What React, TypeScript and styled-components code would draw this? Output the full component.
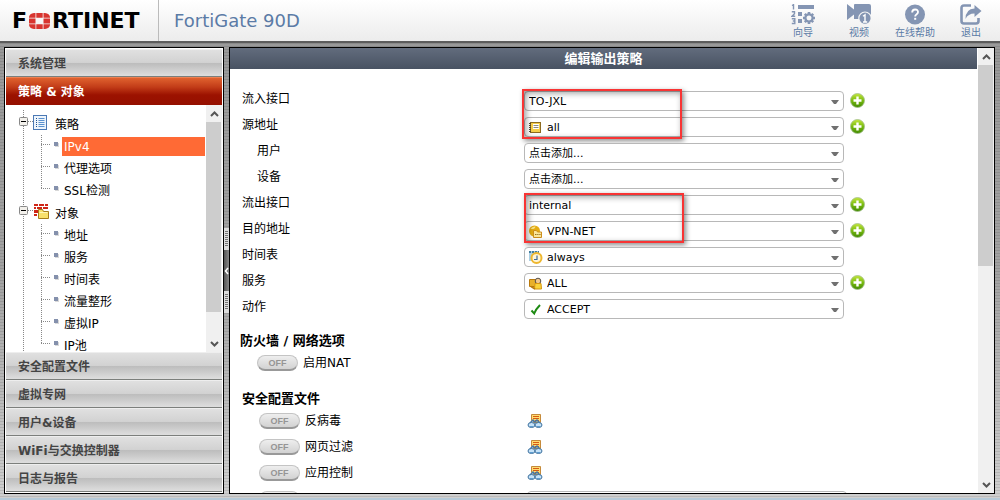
import React, { useState } from 'react';
import styled, { createGlobalStyle, css } from 'styled-components';

const GlobalStyle = createGlobalStyle`
  * { box-sizing: border-box; }
  body {
    margin: 0;
    font-family: "DejaVu Sans", "Noto Sans CJK SC", sans-serif;
    font-size: 12px;
    color: #000;
  }
  button, select, input { font: inherit; color: inherit; }
  h1, h2, ul { margin: 0; padding: 0; }
  ul { list-style: none; }
`;

const dottedY = 'repeating-linear-gradient(#888 0 1px, transparent 1px 2px)';
const dottedX = 'repeating-linear-gradient(90deg, #888 0 1px, transparent 1px 2px)';

const Page = styled.div`
  display: flex;
  flex-direction: column;
  height: 100vh;
  overflow: hidden;
`;

const Header = styled.header`
  display: flex;
  flex: none;
  height: 43px;
  border-bottom: 2px solid #5c5c5c;
  background: linear-gradient(#ffffff, #ececec);
`;

const Brand = styled.div`
  display: flex;
  align-items: center;
  gap: 2px;
  width: 159px;
  padding-left: 12px;
  border-right: 1px solid #bbb;
  font-size: 22px;
  line-height: 41px;
  font-weight: bold;
`;

const Product = styled.h1`
  flex: 1;
  padding-left: 15px;
  font-size: 18px;
  line-height: 41px;
  font-weight: normal;
  color: #5b7ba6;
`;

const Tools = styled.nav`
  display: flex;
  padding-right: 1px;
`;

const Tool = styled.button`
  display: flex;
  flex-direction: column;
  align-items: center;
  width: 56px;
  padding: 4px 0 0;
  border: 0;
  background: none;
  font-size: 10px;
  line-height: 16px;
  color: #5b7ba6;
  cursor: pointer;
  svg { display: block; }
`;

const Desk = styled.div`
  display: flex;
  flex: 1;
  min-height: 0;
  padding: 4px 5px 4px 4px;
  border-bottom: 2px solid #b6cad8;
  background:
    repeating-linear-gradient(rgba(0, 0, 0, 0.1) 0 1px, transparent 1px 3px),
    linear-gradient(#999 0, #a2a2a2 50%, #cfcfcf 100%);
`;

const Sidebar = styled.aside`
  display: flex;
  flex-direction: column;
  flex: none;
  width: 220px;
  padding: 1px;
  border: 1px solid #000;
  background: #fff;
`;

const MenuHead = styled.button<{ $active?: boolean }>`
  flex: none;
  height: 28px;
  padding: 2px 12px 0;
  border: 0;
  border-bottom: 1px solid #7c7f7c;
  border-top: 1px solid #eee;
  background: linear-gradient(#e0e0e0 0, #d2d2d2 48%, #bdbdbd 52%, #dedede 100%);
  font-weight: bold;
  line-height: 24px;
  text-align: left;
  color: #444;
  cursor: pointer;
  ${p => p.$active && css`
    border-top-color: #ee8152;
    border-bottom-color: #941000;
    background: linear-gradient(#e0622f 0, #c23c18 35%, #9c1200 65%, #951000 100%);
    color: #fff;
  `}
`;

const TreePane = styled.div`
  display: flex;
  flex: 1;
  min-height: 0;
  overflow: hidden;
`;

const Tree = styled.ul`
  flex: 1;
  padding-top: 7px;
  padding-right: 1px;
  overflow: hidden;
  background: ${dottedY} 17px 5px / 1px 100% no-repeat;
`;

const Root = styled.div`
  display: flex;
  align-items: center;
  height: 23px;
  padding-left: 13px;
`;

const Expander = styled.button`
  display: block;
  width: 9px;
  height: 9px;
  margin-bottom: 4px;
  padding: 0;
  border: 0;
  background: none;
  svg { display: block; }
`;

const Dash = styled.span<{ $w: number }>`
  width: ${p => p.$w}px;
  height: 1px;
  margin-bottom: 4px;
  background: ${dottedX};
`;

const RootIcon = styled.span`
  width: 22px;
  height: 18px;
  svg { display: block; }
`;

const Branches = styled.ul`
  margin-left: 35px;
  background: ${dottedY} 0 0 / 1px calc(100% - 12px) no-repeat;
`;

const Branch = styled.li`
  display: flex;
  align-items: center;
  height: 22px;
`;

const Bullet = styled.span`
  width: 4px;
  height: 4px;
  margin: 0 4px 4px 4px;
  background: #8490ac;
  box-shadow: 1px 1px 0 #d8d8d8;
`;

const TreeLink = styled.a<{ $active?: boolean }>`
  flex: 1;
  height: 19px;
  padding-left: 2px;
  line-height: 20px;
  text-decoration: none;
  color: ${p => (p.$active ? '#fff' : '#000')};
  background: ${p => (p.$active ? '#ff6a35' : 'transparent')};
`;

const Bar = styled.div`
  display: flex;
  flex-direction: column;
  flex: none;
  width: 16px;
  background: #f0f0f0;
`;

const BarButton = styled.button`
  display: flex;
  align-items: center;
  justify-content: center;
  height: 17px;
  padding: 0;
  border: 0;
  background: none;
`;

const BarTrack = styled.div`
  flex: 1;
`;

const Thumb = styled.div<{ $size: number }>`
  width: 15px;
  height: ${p => p.$size}%;
  background: #cdcdcd;
`;

const Splitter = styled.div`
  display: flex;
  flex-direction: column;
  justify-content: center;
  flex: none;
  width: 5px;
`;

const Grip = styled.span`
  height: 22px;
  background:
    repeating-linear-gradient(#777 0 1px, transparent 1px 2px) 1px 3px / 3px 16px no-repeat,
    #ddd;
`;

const Collapse = styled.button`
  height: 41px;
  padding: 0;
  border: 0;
  background: linear-gradient(90deg, #555, #888);
  svg { display: block; }
`;

const Panel = styled.main`
  display: flex;
  flex: 1;
  min-width: 0;
  border: 1px solid #000;
  background: #fff;
`;

const Content = styled.div`
  flex: 1;
  min-width: 0;
  margin-right: 1px;
  overflow: hidden;
`;

const Title = styled.h2`
  height: 21px;
  font-size: 13px;
  line-height: 22px;
  text-align: center;
  color: #fff;
  background: linear-gradient(#626c7d, #485262);
`;

const Fields = styled.div`
  display: flex;
  flex-direction: column;
  gap: 6px;
  padding: 22px 12px 0;
`;

const FieldGroup = styled.div`
  position: relative;
  display: flex;
  flex-direction: column;
  gap: 6px;
`;

const Highlight = styled.span<{ $left: number }>`
  position: absolute;
  top: -2px;
  bottom: -2px;
  left: ${p => p.$left}px;
  width: 160px;
  border: 2px solid #f83434;
  box-shadow: 2px 2px 5px rgba(0, 0, 0, 0.45), inset 2px 2px 6px rgba(0, 0, 0, 0.4);
  pointer-events: none;
`;

const FieldRow = styled.div`
  display: flex;
  height: 20px;
`;

const FieldLabel = styled.label<{ $nested?: boolean }>`
  flex: none;
  width: 282px;
  padding-left: ${p => (p.$nested ? 15 : 0)}px;
  line-height: 16px;
`;

const Combo = styled.span`
  position: relative;
  display: block;
  width: 320px;
  height: 20px;
`;

const Select = styled.select<{ $icon?: boolean }>`
  display: block;
  width: 100%;
  height: 20px;
  padding: 2px 20px 0 ${p => (p.$icon ? 22 : 4)}px;
  border: 1px solid #b8b8b8;
  border-radius: 4px;
  background: #fff;
  appearance: none;
  font-size: 11px;
  line-height: 16px;
`;

const ComboIcon = styled.svg`
  position: absolute;
  top: 4px;
  left: 5px;
  pointer-events: none;
`;

const Caret = styled.svg`
  position: absolute;
  top: 9px;
  right: 5px;
  pointer-events: none;
`;

const AddButton = styled.button`
  width: 15px;
  height: 15px;
  margin: 2px 0 0 6px;
  padding: 0;
  border: 0;
  background: none;
  svg { display: block; }
`;

const Section = styled.section<{ $top: number; $left: number }>`
  padding: ${p => p.$top}px 12px 0 ${p => p.$left}px;
`;

const SectionTitle = styled.h2`
  margin-bottom: 5px;
  font-size: 13px;
  line-height: 18px;
`;

const OptionRow = styled.div`
  display: flex;
  height: 16px;
  margin-bottom: 10px;
  padding-left: 17px;
`;

const SwitchLabel = styled.label`
  display: flex;
  flex: none;
  width: 268px;
  gap: 5px;
  line-height: 16px;
`;

const SwitchInput = styled.input`
  position: absolute;
  opacity: 0;
`;

const Knob = styled.span`
  width: 41px;
  height: 16px;
  border-radius: 8px;
  border: 1px solid #c4c4c4;
  border-bottom: 2px solid #999;
  background: linear-gradient(#eeeeee, #d2d2d2);
  font: bold 9px/14px "Liberation Sans", sans-serif;
  text-align: center;
  color: #959595;
`;

const IconButton = styled.button`
  height: 16px;
  padding: 0;
  border: 0;
  background: none;
  svg { display: block; }
`;

const steel = '#8495b3';

const LogoO = () => (
  <svg width="21" height="16" viewBox="0 0 21 16" aria-hidden="true">
    <path
      fill="#d8352f"
      d="M5 0h1.500v4.800H0V4Q.5.500 5 0zM7.300 0h6.400v4.800H7.300zM14.500 0H16q4.500.5 5 4v.8h-6.500zM0 5.600h6.500v4.800H0zM14.500 5.600H21v4.800h-6.500zM0 11.200h6.500V16H5Q.5 15.500 0 12zM7.300 11.200h6.400V16H7.300zM14.500 11.200H21v.8q-.5 3.500-5 4h-1.500z"
    />
  </svg>
);

const WizardIcon = () => (
  <svg width="24" height="21" viewBox="0 0 24 21" fill={steel}>
    <path d="M7 1h16v4H7zM7 8h4v4H7zM7 15h4v4H7z" />
    <path d="M1 1.500L2.500.7V5.500M.8 7.700h2.700v2L1 12.300h3.200M.8 14.700h3v2.300H1.800h2v2.500h-3" fill="none" stroke={steel} strokeWidth="1.400" />
    <circle cx="18" cy="14" r="3.600" fill="none" stroke={steel} strokeWidth="2.200" />
    <g stroke={steel} strokeWidth="2.600">
      <path d="M18 8v2.200M18 17.800V20M12 14h2.200M21.800 14H24M13.800 9.800l1.500 1.500M20.700 16.700l1.500 1.500M22.200 9.800l-1.500 1.500M15.300 16.700l-1.500 1.500" />
    </g>
  </svg>
);

const VideoIcon = () => (
  <svg width="24" height="21" viewBox="0 0 24 21" fill={steel}>
    <path d="M0 0l7 5.500V1q0-1 1-1h14q2 0 2 2v13H7v-4.500L0 16z" />
    <circle cx="18" cy="14.200" r="6.200" stroke="#f4f4f4" strokeWidth="1.200" />
    <path d="M16 12.300l2-1.500V18M16 18h4.200" fill="none" stroke="#fff" strokeWidth="1.400" />
  </svg>
);

const HelpIcon = () => (
  <svg width="20" height="21" viewBox="0 0 20 21">
    <circle cx="10" cy="10.500" r="10" fill={steel} />
    <path d="M7.200 8.500q0-3 2.900-3t2.900 2.600q0 1.500-1.600 2.400-1.200.7-1.200 2" fill="none" stroke="#fff" strokeWidth="1.900" />
    <path d="M9.200 13.800h2v2h-2z" fill="#fff" />
  </svg>
);

const ExitIcon = () => (
  <svg width="22" height="21" viewBox="0 0 22 21">
    <path d="M11 1.500H4q-2.500 0-2.500 2.500v13q0 2.500 2.500 2.500h12q2.500 0 2.500-2.500v-3" fill="none" stroke={steel} strokeWidth="2.600" />
    <path d="M14.500 1l7 6-7 6V9.500Q8 9.500 5.500 15 5.500 5 14.500 4.500z" fill={steel} />
  </svg>
);

const MinusBox = () => (
  <svg width="9" height="9" viewBox="0 0 9 9">
    <rect x=".5" y=".5" width="8" height="8" rx="1" fill="#f3f1ec" stroke="#888" />
    <path d="M2 4.500h5" stroke="#000" />
  </svg>
);

const PolicyIcon = () => (
  <svg width="15" height="16" viewBox="0 0 15 16">
    <rect x=".5" y=".5" width="13" height="14" fill="#eef5fc" stroke="#4b79b5" />
    <path d="M3 3.500h1M3 5.500h1M3 7.500h1M3 9.500h1M3 11.500h1" stroke="#1e4f8e" />
    <path d="M5.500 3.500h6M5.500 5.500h6M5.500 7.500h6M5.500 9.500h6M5.500 11.500h6" stroke="#5b92cf" />
  </svg>
);

const ObjectIcon = () => (
  <svg width="17" height="17" viewBox="0 0 17 17">
    <path d="M1 0h14v11H1z" fill="#fff" />
    <path d="M1 0h4v2H1zM6 0h5v2H6zM12 0h3v2h-3zM1 3h2v2H1zM4 3h5v2H4zM10 3h5v2h-5zM1 6h4v3H1zM1 10h3v2H1z" fill="#cf2617" />
    <path d="M5.500 14.500v-9h4l1 2h5v7z" fill="#f8e06b" stroke="#a67d19" />
    <path d="M6.500 8.500h8" stroke="#fff7b9" />
  </svg>
);

const PlusIcon = () => (
  <svg width="15" height="15" viewBox="0 0 15 15">
    <defs>
      <linearGradient id="plusFill" x1="0" y1="0" x2="0" y2="1">
        <stop offset="0" stopColor="#c4e63c" />
        <stop offset=".5" stopColor="#79bb10" />
        <stop offset="1" stopColor="#418a02" />
      </linearGradient>
    </defs>
    <circle cx="7.500" cy="7.500" r="7" fill="url(#plusFill)" stroke="#a3bf8e" strokeWidth=".8" />
    <path d="M7.500 3.500v8M3.500 7.500h8" stroke="#fff" strokeWidth="2.400" />
  </svg>
);

const ProfileIcon = () => (
  <svg width="16" height="16" viewBox="0 0 16 16">
    <path d="M4.500 1.500h9v8h-7v-2h-2z" fill="#ffdc70" stroke="#c58a3b" />
    <path d="M6 3.500h6M6 5.500h6M8 7.500h4" stroke="#d65c12" />
    <path d="M3 10l3-3 2 2 2-2 3 3" fill="none" stroke="#4478a9" strokeWidth="1.500" />
    <ellipse cx="4.500" cy="12" rx="3.500" ry="2.500" fill="#c6e2f7" stroke="#3d719f" />
    <ellipse cx="11.500" cy="12" rx="3.500" ry="2.500" fill="#c6e2f7" stroke="#3d719f" />
    <path d="M3 13.500h3M10 13.500h3" stroke="#5c9cd0" />
  </svg>
);

const fieldIcons: Record<string, React.ReactNode> = {
  book: (
    <>
      <rect x="1.500" y="1.500" width="10" height="10" fill="#f7cf4a" stroke="#8d6b20" />
      <path d="M4 3h6v5H4z" fill="#fff" />
      <path d="M4.500 4.500h5M4.500 6.500h5" stroke="#8d8a80" />
      <path d="M0 2.500h2M0 4.500h2M0 6.500h2M0 8.500h2M0 10.500h2" stroke="#4c4637" />
    </>
  ),
  globe: (
    <>
      <circle cx="5.500" cy="6" r="5.500" fill="#e5ac13" />
      <path d="M1.500 4q2-3 5-2.500-.5 3-5 2.500z" fill="#f9e389" />
      <path d="M4.500 12.500v-7h3l1 1.500h4v5.500z" fill="#fbe69a" stroke="#cf8e1c" />
      <path d="M6 9.500h1.500M8.200 9.500h1.300M10.300 9.500h1.300" stroke="#95701f" />
    </>
  ),
  clock: (
    <>
      <path d="M0 0h10v10H0z" fill="#a9cfe4" />
      <path d="M0 1h10" stroke="#437d9e" strokeWidth="2" strokeDasharray="2 1" />
      <circle cx="7.500" cy="7" r="5" fill="#fff5d7" stroke="#eeb72f" strokeWidth="2" />
      <path d="M8 4.500v4H5" fill="none" stroke="#3c6a9b" strokeWidth="1.200" />
    </>
  ),
  service: (
    <>
      <path d="M.5 2.500h6v7h-6z" fill="#e8b02a" stroke="#b9790c" />
      <circle cx="9" cy="4" r="2.800" fill="#f2c88d" stroke="#55504b" />
      <path d="M6 6.500h6l.5 5.500h-7z" fill="#f9d33b" stroke="#d8970f" />
      <path d="M2 9.500l4 2.500" stroke="#b87a0c" strokeWidth="1.500" />
    </>
  ),
  check: <path d="M2.500 7.500l2.700 3Q7 6 11 2" fill="none" stroke="#1d8a12" strokeWidth="2" />,
};

const Chevron = ({ up }: { up?: boolean }) => (
  <svg width="9" height="6" viewBox="0 0 9 6" fill="none" stroke="#555" strokeWidth="2">
    <path d={up ? 'M1 5l3.500-3.500L8 5' : 'M1 1l3.500 3.500L8 1'} />
  </svg>
);

const ScrollBar = ({ size }: { size: number }) => (
  <Bar>
    <BarButton type="button" aria-label="向上滚动"><Chevron up /></BarButton>
    <BarTrack><Thumb $size={size} /></BarTrack>
    <BarButton type="button" aria-label="向下滚动"><Chevron /></BarButton>
  </Bar>
);

interface FieldProps {
  id: string;
  label: string;
  value: string;
  icon?: string;
  nested?: boolean;
  add?: boolean;
}

const Dropdown = ({ id, value, icon, label }: { id: string; value?: string; icon?: string; label?: string }) => (
  <Combo>
    <Select id={id} $icon={!!icon} aria-label={label}>
      {value && <option>{value}</option>}
    </Select>
    {icon && <ComboIcon width="14" height="14" viewBox="0 0 14 14">{fieldIcons[icon]}</ComboIcon>}
    <Caret width="8" height="5" viewBox="0 0 8 5"><path d="M0 0h8L5 4H3z" fill="#707070" /></Caret>
  </Combo>
);

const Field = ({ id, label, value, icon, nested, add }: FieldProps) => (
  <FieldRow>
    <FieldLabel htmlFor={id} $nested={nested}>{label}</FieldLabel>
    <Dropdown id={id} value={value} icon={icon} />
    {add && <AddButton type="button" aria-label={`添加${label}`}><PlusIcon /></AddButton>}
  </FieldRow>
);

const Switch = ({ label }: { label?: string }) => {
  const [on, setOn] = useState(false);
  return (
    <SwitchLabel>
      <SwitchInput type="checkbox" role="switch" checked={on} onChange={e => setOn(e.target.checked)} />
      <Knob>{label && (on ? 'ON' : 'OFF')}</Knob>
      {label}
    </SwitchLabel>
  );
};

const tree = [
  { name: '策略', icon: <PolicyIcon />, items: ['IPv4', '代理选项', 'SSL检测'] },
  { name: '对象', icon: <ObjectIcon />, items: ['地址', '服务', '时间表', '流量整形', '虚拟IP', 'IP池'] },
];

const tools = [
  { name: '向导', icon: <WizardIcon /> },
  { name: '视频', icon: <VideoIcon /> },
  { name: '在线帮助', icon: <HelpIcon /> },
  { name: '退出', icon: <ExitIcon /> },
];

export default function App() {
  return (
    <Page>
      <GlobalStyle />
      <Header>
        <Brand><span>F</span><LogoO /><span>RTINET</span></Brand>
        <Product>FortiGate 90D</Product>
        <Tools>
          {tools.map(t => <Tool type="button" key={t.name}>{t.icon}{t.name}</Tool>)}
        </Tools>
      </Header>
      <Desk>
        <Sidebar>
          <MenuHead type="button">系统管理</MenuHead>
          <MenuHead type="button" $active>策略 &amp; 对象</MenuHead>
          <TreePane>
            <Tree>
              {tree.map(group => (
                <li key={group.name}>
                  <Root>
                    <Expander type="button" aria-label={`折叠${group.name}`}><MinusBox /></Expander>
                    <Dash $w={5} />
                    <RootIcon>{group.icon}</RootIcon>
                    {group.name}
                  </Root>
                  <Branches>
                    {group.items.map(item => (
                      <Branch key={item}>
                        <Dash $w={9} />
                        <Bullet />
                        <TreeLink href="#" $active={item === 'IPv4'}>{item}</TreeLink>
                      </Branch>
                    ))}
                  </Branches>
                </li>
              ))}
            </Tree>
            <ScrollBar size={89} />
          </TreePane>
          {['安全配置文件', '虚拟专网', '用户&设备', 'WiFi与交换控制器', '日志与报告'].map(name => (
            <MenuHead type="button" key={name}>{name}</MenuHead>
          ))}
        </Sidebar>
        <Splitter>
          <Grip />
          <Collapse type="button" aria-label="收起菜单">
            <svg width="5" height="8" viewBox="0 0 5 8"><path d="M4 1L1.500 4 4 7" fill="none" stroke="#fff" strokeWidth="1.500" /></svg>
          </Collapse>
          <Grip />
        </Splitter>
        <Panel>
          <Content>
            <Title>编辑输出策略</Title>
            <form>
              <Fields>
                <FieldGroup>
                  <Field id="srcintf" label="流入接口" value="TO-JXL" add />
                  <Field id="srcaddr" label="源地址" value="all" icon="book" add />
                  <Highlight $left={280} />
                </FieldGroup>
                <Field id="users" label="用户" value="点击添加..." nested />
                <Field id="devices" label="设备" value="点击添加..." nested />
                <FieldGroup>
                  <Field id="dstintf" label="流出接口" value="internal" add />
                  <Field id="dstaddr" label="目的地址" value="VPN-NET" icon="globe" add />
                  <Highlight $left={282} />
                </FieldGroup>
                <Field id="schedule" label="时间表" value="always" icon="clock" />
                <Field id="service" label="服务" value="ALL" icon="service" add />
                <Field id="action" label="动作" value="ACCEPT" icon="check" />
              </Fields>
              <Section $top={13} $left={10}>
                <SectionTitle>防火墙 / 网络选项</SectionTitle>
                <OptionRow><Switch label="启用NAT" /></OptionRow>
              </Section>
              <Section $top={9} $left={12}>
                <SectionTitle>安全配置文件</SectionTitle>
                {['反病毒', '网页过滤', '应用控制'].map(name => (
                  <OptionRow key={name}>
                    <Switch label={name} />
                    <IconButton type="button" aria-label={`查看${name}`}><ProfileIcon /></IconButton>
                  </OptionRow>
                ))}
                <OptionRow>
                  <Switch />
                  <Dropdown id="profile" label="配置文件" />
                </OptionRow>
              </Section>
            </form>
          </Content>
          <ScrollBar size={49} />
        </Panel>
      </Desk>
    </Page>
  );
}
